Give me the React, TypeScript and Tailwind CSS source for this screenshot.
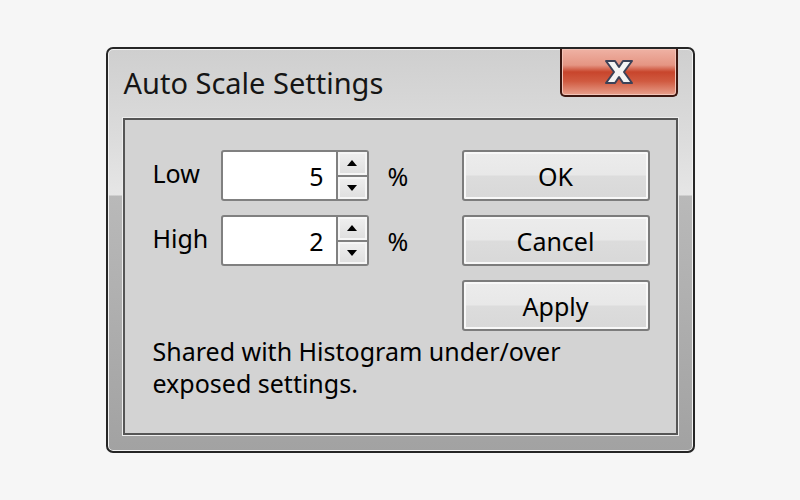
const font = "font-['Noto_Sans','Open_Sans',sans-serif]";

function Spinner() {
  return (
    <div className="flex h-[51px] w-[31px] flex-col rounded-r-[3px] border-2 border-l-0 border-[#808080] bg-[#f4f4f4]">
      <div className="flex flex-1 items-center justify-center border-b-2 border-[#808080] bg-[linear-gradient(to_bottom,#f0f0f0,#dedede)] shadow-[inset_0_0_0_2px_#f6f6f6]">
        <svg width="10" height="6" viewBox="0 0 10 6">
          <path d="M5 0 L10 6 L0 6 Z" fill="#000" />
        </svg>
      </div>
      <div className="flex flex-1 items-center justify-center bg-[linear-gradient(to_bottom,#f0f0f0,#dedede)] shadow-[inset_0_0_0_2px_#f6f6f6]">
        <svg width="10" height="6" viewBox="0 0 10 6">
          <path d="M0 0 L10 0 L5 6 Z" fill="#000" />
        </svg>
      </div>
    </div>
  );
}

function NumberRow({ label, value }: { label: string; value: string }) {
  return (
    <div className="flex h-[51px] items-center">
      <div className="w-[68px] pb-[5px]">{label}</div>
      <div className="flex h-[51px] w-[117px] items-center justify-end rounded-l-[3px] border-2 border-[#808080] bg-white pr-[12px]">
        {value}
      </div>
      <Spinner />
      <div className="ml-[19px]">%</div>
    </div>
  );
}

function Btn({ children }: { children: string }) {
  return (
    <button className="flex h-[51px] w-[188px] items-center justify-center rounded-[3px] border-2 border-[#7c7c7c] bg-[linear-gradient(to_bottom,#ececec_0%,#e8e8e8_48%,#dcdcdc_52%,#d8d8d8_100%)] text-black shadow-[inset_0_0_0_2px_#f8f8f8]">
      {children}
    </button>
  );
}

export default function App() {
  return (
    <div className={`flex h-[500px] w-[800px] items-center justify-center bg-[#f6f6f6] ${font}`}>
      <div className="flex h-[406px] w-[589px] flex-col rounded-[7px] border-2 border-[#262626] bg-[linear-gradient(to_bottom,#cfcfcf_0px,#dcdcdc_90px,#e6e6e6_146px,#b9b9b9_147px,#a2a2a2_100%)] px-[15px] pb-[16px] shadow-[inset_0_0_0_1px_#f2f2f2]">
        <div className="flex h-[69px] items-start justify-between">
          <div className="self-center pl-[1px] pb-[1px] text-[29px] leading-[36px] text-[#151515]">Auto Scale Settings</div>
          <div className="flex h-[48px] w-[118px] items-center justify-center rounded-b-[5px] border-2 border-t-0 border-[#3d1710] bg-[linear-gradient(to_bottom,#efb2a4_0%,#e59583_35%,#c8452c_50%,#d05a40_70%,#e8a08c_100%)] shadow-[inset_0_0_0_1px_#f3c4b8]">
            <svg width="32" height="26" viewBox="0 0 32 26">
              <path
                d="M3 2 H12 L16 8 L20 2 H29 L21 13 L29 24 H20 L16 18 L12 24 H3 L11 13 Z"
                fill="#f4f4f4"
                stroke="#3c4258"
                strokeWidth="2"
                strokeLinejoin="round"
              />
            </svg>
          </div>
        </div>
        <div className="flex flex-1 flex-col border-2 border-[#555555] bg-[#d3d3d3] pl-[28px] pt-[30px] text-[25px] leading-[32px] text-black shadow-[0_0_0_1px_#ededed]">
          <div className="flex">
            <div className="flex w-[309px] flex-col gap-[14px]">
              <NumberRow label="Low" value="5" />
              <NumberRow label="High" value="2" />
            </div>
            <div className="flex flex-col gap-[14px]">
              <Btn>OK</Btn>
              <Btn>Cancel</Btn>
              <Btn>Apply</Btn>
            </div>
          </div>
          <div className="mt-[4px]">
            Shared with Histogram under/over
            <br />
            exposed settings.
          </div>
        </div>
      </div>
    </div>
  );
}
